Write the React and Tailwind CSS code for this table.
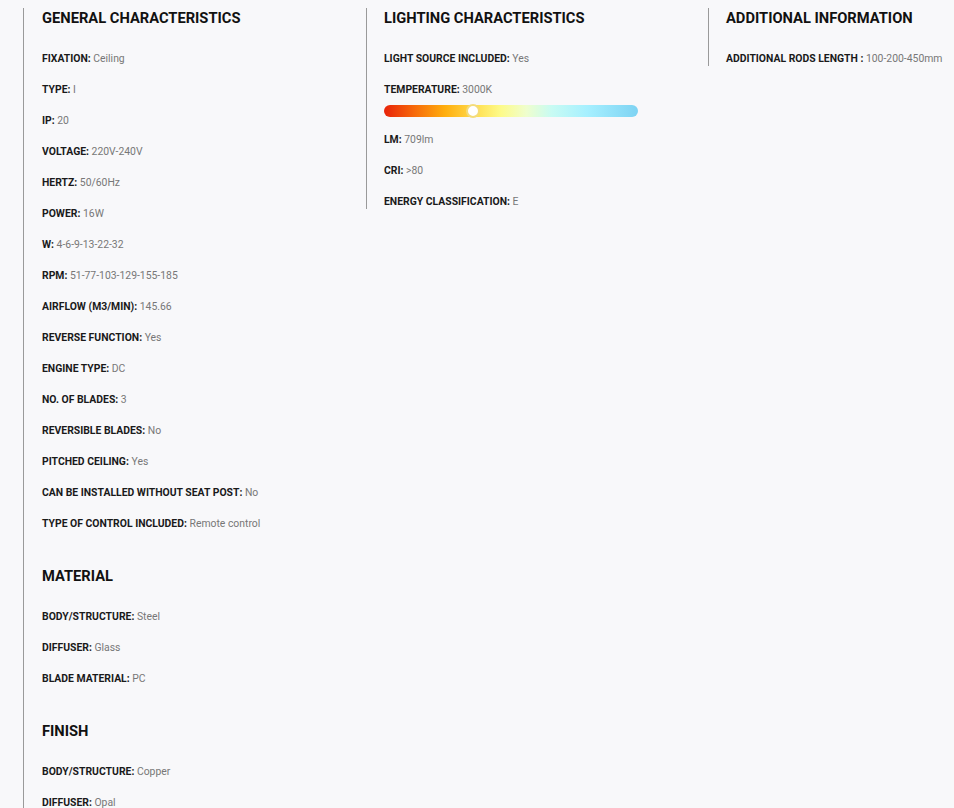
import React from 'react';

const general = [
    ['FIXATION', 'Ceiling'],
    ['TYPE', 'I'],
    ['IP', '20'],
    ['VOLTAGE', '220V-240V'],
    ['HERTZ', '50/60Hz'],
    ['POWER', '16W'],
    ['W', '4-6-9-13-22-32'],
    ['RPM', '51-77-103-129-155-185'],
    ['AIRFLOW (M3/MIN)', '145.66'],
    ['REVERSE FUNCTION', 'Yes'],
    ['ENGINE TYPE', 'DC'],
    ['NO. OF BLADES', '3'],
    ['REVERSIBLE BLADES', 'No'],
    ['PITCHED CEILING', 'Yes'],
    ['CAN BE INSTALLED WITHOUT SEAT POST', 'No'],
    ['TYPE OF CONTROL INCLUDED', 'Remote control'],
];

const material = [
    ['BODY/STRUCTURE', 'Steel'],
    ['DIFFUSER', 'Glass'],
    ['BLADE MATERIAL', 'PC'],
];

const finish = [
    ['BODY/STRUCTURE', 'Copper'],
    ['DIFFUSER', 'Opal'],
];

function Heading({ children, className = '' }) {
    return (
        <h2 className={`text-[14.7px] leading-[20px] font-bold text-[#111] ${className}`}>
            {children}
        </h2>
    );
}

function Row({ label, value, sep = ':' }) {
    return (
        <p className="text-[10.4px] leading-[15px]">
            <span className="font-bold text-[#1a1a1a]">{label}{sep}</span>{' '}
            <span className="text-[#777]">{value}</span>
        </p>
    );
}

function Rows({ items }) {
    return (
        <div className="mt-[23px] flex flex-col gap-4">
            {items.map(([label, value]) => (
                <Row key={label} label={label} value={value} />
            ))}
        </div>
    );
}

function TemperatureBar() {
    return (
        <div className="relative mt-2 h-3 w-[254px] rounded-full bg-[linear-gradient(90deg,#e8230a_0%,#f76a0a_12%,#ffae0d_24%,#ffe45a_38%,#fdfb8a_46%,#effecd_56%,#c8fbf3_66%,#a6f0ff_80%,#7ed3f3_100%)]">
            <div className="absolute -top-px left-[82px] h-[14px] w-[14px] rounded-full border-2 border-[#f4dc7a] bg-white" />
        </div>
    );
}

export default function App() {
    return (
        <div
            className="min-h-screen bg-[#f8f8fa] pl-[23px] pt-2"
            style={{ fontFamily: 'Roboto, "Liberation Sans", sans-serif' }}
        >
            <div className="grid grid-cols-[343px_342px_1fr] items-start">
                <div className="border-l border-[#9a9a9a] pl-[18px] min-h-[800px]">
                    <Heading>GENERAL CHARACTERISTICS</Heading>
                    <Rows items={general} />
                    <Heading className="mt-[35px]">MATERIAL</Heading>
                    <Rows items={material} />
                    <Heading className="mt-[35px]">FINISH</Heading>
                    <Rows items={finish} />
                </div>

                <div className="border-l border-[#9a9a9a] pl-[17px]">
                    <Heading>LIGHTING CHARACTERISTICS</Heading>
                    <div className="mt-[23px] flex flex-col">
                        <Row label="LIGHT SOURCE INCLUDED" value="Yes" />
                        <div className="mt-4">
                            <Row label="TEMPERATURE" value="3000K" />
                            <TemperatureBar />
                        </div>
                        <div className="mt-[15px] flex flex-col gap-4">
                            <Row label="LM" value="709lm" />
                            <Row label="CRI" value=">80" />
                            <Row label="ENERGY CLASSIFICATION" value="E" />
                        </div>
                    </div>
                </div>

                <div className="border-l border-[#9a9a9a] pl-[17px]">
                    <Heading>ADDITIONAL INFORMATION</Heading>
                    <div className="mt-[23px]">
                        <Row label="ADDITIONAL RODS LENGTH " sep=":" value="100-200-450mm" />
                    </div>
                </div>
            </div>
        </div>
    );
}
